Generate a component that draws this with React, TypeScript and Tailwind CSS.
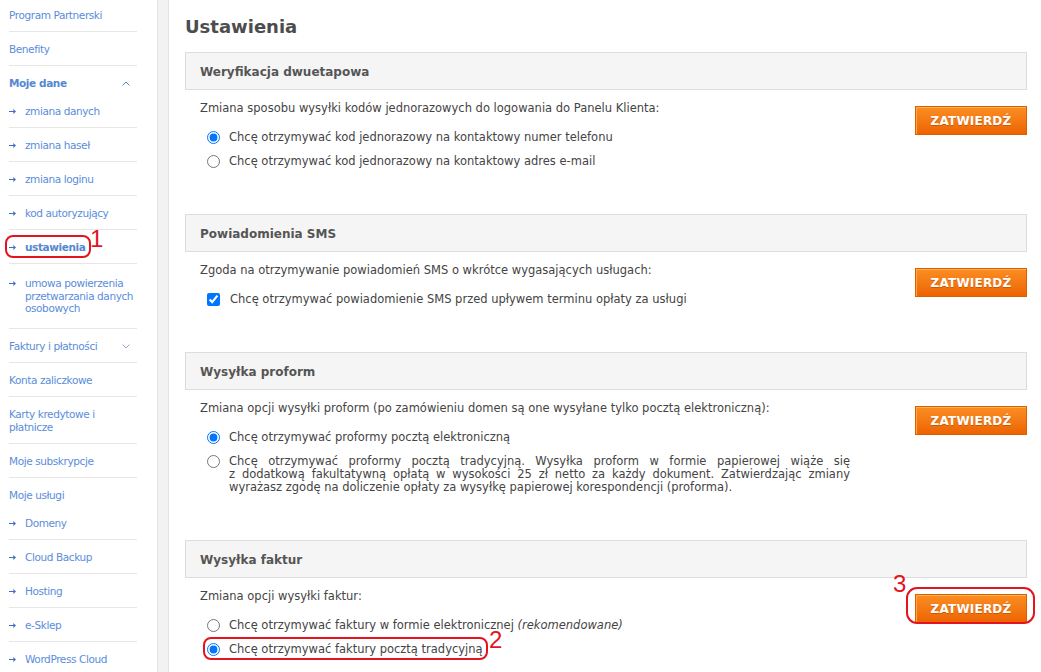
import React from "react";

const Arrow = () => (
  <svg width="7" height="5" viewBox="0 0 7 5" className="shrink-0 mt-[4px]">
    <path d="M0 2.5H6.2M4.2 0.6L6.3 2.5L4.2 4.4" stroke="#3f70bf" strokeWidth="1.1" fill="none" />
  </svg>
);

type ItemProps = {
  children: React.ReactNode;
  sub?: boolean;
  bold?: boolean;
  border?: boolean;
  cls?: string;
  extra?: React.ReactNode;
  chevron?: "up" | "down";
};

const Item = ({ children, sub, bold, border = true, cls = "pt-[11px] pb-[9px] leading-[13px]", extra, chevron }: ItemProps) => (
  <div className={`relative flex items-start ${border ? "border-b border-[#e6e6e6]" : ""} ${cls}`}>
    {sub && <Arrow />}
    <span className={`${sub ? "ml-[9px]" : ""} ${bold ? "font-bold text-[#5587d2]" : "text-[#5a8ddb]"}`}>{children}</span>
    {chevron === "up" && (
      <svg width="8" height="5" viewBox="0 0 8 5" className="ml-auto mr-[7px] mt-[4px]">
        <path d="M0.5 4.5L4 1L7.5 4.5" stroke="#4a86d6" strokeWidth="1" fill="none" />
      </svg>
    )}
    {chevron === "down" && (
      <svg width="8" height="5" viewBox="0 0 8 5" className="ml-auto mr-[7px] mt-[4px]">
        <path d="M0.5 0.5L4 4L7.5 0.5" stroke="#8fa9d0" strokeWidth="1" fill="none" />
      </svg>
    )}
    {extra}
  </div>
);

const Button = ({ children }: { children?: React.ReactNode }) => (
  <div className="relative">
    <button className="w-[112px] h-[29px] border border-[#dc5e00] bg-linear-to-b from-[#fb8e22] to-[#ec6400] shadow-[inset_0_1px_0_#fdb450,inset_1px_0_0_#fca645] text-white font-bold text-[12px] font-['DejaVu_Sans',sans-serif] tracking-[0.2px] [text-shadow:0_1px_0_rgba(120,40,0,0.35)]">
      ZATWIERDŹ
    </button>
    {children}
  </div>
);

const Radio = ({ checked, name }: { checked?: boolean; name: string }) => (
  <input type="radio" name={name} defaultChecked={checked} className="m-0 w-[13px] h-[13px] shrink-0" />
);

const Section = ({
  title,
  desc,
  children,
  mb = "mb-[41px]",
  button,
}: {
  title: string;
  desc: React.ReactNode;
  children: React.ReactNode;
  mb?: string;
  button?: React.ReactNode;
}) => (
  <div className={mb}>
    <div className="h-[38px] border border-[#dcdcdc] bg-[#f5f5f5] pl-[14px] pt-[1px] flex items-center">
      <span className="font-bold text-[12px] text-[#555]">{title}</span>
    </div>
    <div className="flex justify-between pl-[15px]">
      <div className="w-[650px] pt-[10px]">
        <div className="leading-[16px]">{desc}</div>
        <div className="mt-[9px]">{children}</div>
      </div>
      <div className="pt-[16px]">{button ?? <Button />}</div>
    </div>
  </div>
);

const Row = ({ children, cls = "" }: { children: React.ReactNode; cls?: string }) => (
  <label className={`relative flex items-center h-[24px] pl-[7px] gap-[9px] leading-[16px] ${cls}`}>{children}</label>
);

export default function App() {
  return (
    <div className="w-[1041px] h-[672px] overflow-hidden bg-white flex font-['DejaVu_Sans',sans-serif] text-[11px] text-[#444]">
      {/* Sidebar */}
      <div className="w-[157px] shrink-0 pl-[9px] pr-[20px] text-[10.5px] tracking-[-0.4px]">
        <Item cls="pt-[9px] pb-[9px] leading-[13px]">Program Partnerski</Item>
        <Item>Benefity</Item>
        <Item bold border={false} cls="pt-[11px] pb-[4px] leading-[13px]" chevron="up">
          Moje dane
        </Item>
        <Item sub>zmiana danych</Item>
        <Item sub>zmiana haseł</Item>
        <Item sub>zmiana loginu</Item>
        <Item sub>kod autoryzujący</Item>
        <Item
          sub
          bold
          extra={
            <>
              <div className="absolute left-[-4px] top-[5px] w-[86px] h-[23px] border-2 border-[#e3141e] rounded-[8px]" />
              <div className="absolute left-[81px] top-[-3px] text-[24px] leading-none text-[#e3141e] font-['Liberation_Sans',sans-serif] tracking-normal">
                1
              </div>
            </>
          }
        >
          ustawienia
        </Item>
        <Item sub cls="pt-[13px] pb-[13px] leading-[12.5px]">
          umowa powierzenia
          <br />
          przetwarzania danych
          <br />
          osobowych
        </Item>
        <Item chevron="down">Faktury i płatności</Item>
        <Item>Konta zaliczkowe</Item>
        <Item>
          Karty kredytowe i
          <br />
          płatnicze
        </Item>
        <Item>Moje subskrypcje</Item>
        <Item border={false} cls="pt-[11px] pb-[4px] leading-[13px]">
          Moje usługi
        </Item>
        <Item sub>Domeny</Item>
        <Item sub>Cloud Backup</Item>
        <Item sub>Hosting</Item>
        <Item sub>e-Sklep</Item>
        <Item sub>WordPress Cloud</Item>
      </div>

      {/* Gray strip */}
      <div className="w-[12px] shrink-0 bg-[#f2f2f2] border-l border-r border-[#e4e4e4]" />

      {/* Main */}
      <div className="flex-1 pl-[16px] pr-[14px] text-[11.5px]">
        <h1 className="pt-[15px] mb-[13px] leading-[24px] text-[18px] font-bold text-[#4d4d4d]">Ustawienia</h1>

        <Section
          title="Weryfikacja dwuetapowa"
          desc="Zmiana sposobu wysyłki kodów jednorazowych do logowania do Panelu Klienta:"
        >
          <Row>
            <Radio name="a" checked />
            <span>Chcę otrzymywać kod jednorazowy na kontaktowy numer telefonu</span>
          </Row>
          <Row>
            <Radio name="a" />
            <span>Chcę otrzymywać kod jednorazowy na kontaktowy adres e-mail</span>
          </Row>
        </Section>

        <Section
          title="Powiadomienia SMS"
          desc="Zgoda na otrzymywanie powiadomień SMS o wkrótce wygasających usługach:"
        >
          <Row cls="gap-[10px]">
            <input type="checkbox" defaultChecked className="m-0 w-[13px] h-[13px] shrink-0" />
            <span>Chcę otrzymywać powiadomienie SMS przed upływem terminu opłaty za usługi</span>
          </Row>
        </Section>

        <Section
          title="Wysyłka proform"
          desc="Zmiana opcji wysyłki proform (po zamówieniu domen są one wysyłane tylko pocztą elektroniczną):"
        >
          <Row>
            <Radio name="c" checked />
            <span>Chcę otrzymywać proformy pocztą elektroniczną</span>
          </Row>
          <label className="flex items-start pl-[7px] gap-[9px] pt-[6px] pb-[5px] leading-[13px]">
            <Radio name="c" />
            <div className="w-[621px]">
              <div className="text-justify [text-align-last:justify]">
                Chcę otrzymywać proformy pocztą tradycyjną. Wysyłka proform w formie papierowej wiąże się
              </div>
              <div className="text-justify [text-align-last:justify]">
                z dodatkową fakultatywną opłatą w wysokości 25 zł netto za każdy dokument. Zatwierdzając zmiany
              </div>
              <div>wyrażasz zgodę na doliczenie opłaty za wysyłkę papierowej korespondencji (proforma).</div>
            </div>
          </label>
        </Section>

        <Section
          title="Wysyłka faktur"
          desc="Zmiana opcji wysyłki faktur:"
          button={
            <Button>
              <div className="absolute left-[-9px] top-[-7px] w-[129px] h-[37px] border-2 border-[#e3141e] rounded-[11px] pointer-events-none" />
              <div className="absolute left-[-22px] top-[-22px] text-[24px] leading-none text-[#e3141e] font-['Liberation_Sans',sans-serif]">
                3
              </div>
            </Button>
          }
        >
          <Row>
            <Radio name="d" />
            <span>
              Chcę otrzymywać faktury w formie elektronicznej <i>(rekomendowane)</i>
            </span>
          </Row>
          <Row>
            <Radio name="d" checked />
            <span>Chcę otrzymywać faktury pocztą tradycyjną</span>
            <div className="absolute left-[3px] top-[0px] w-[285px] h-[23px] border-2 border-[#e3141e] rounded-[8px] pointer-events-none" />
            <div className="absolute left-[289px] top-[-9px] text-[24px] leading-none text-[#e3141e] font-['Liberation_Sans',sans-serif]">
              2
            </div>
          </Row>
        </Section>
      </div>
    </div>
  );
}
